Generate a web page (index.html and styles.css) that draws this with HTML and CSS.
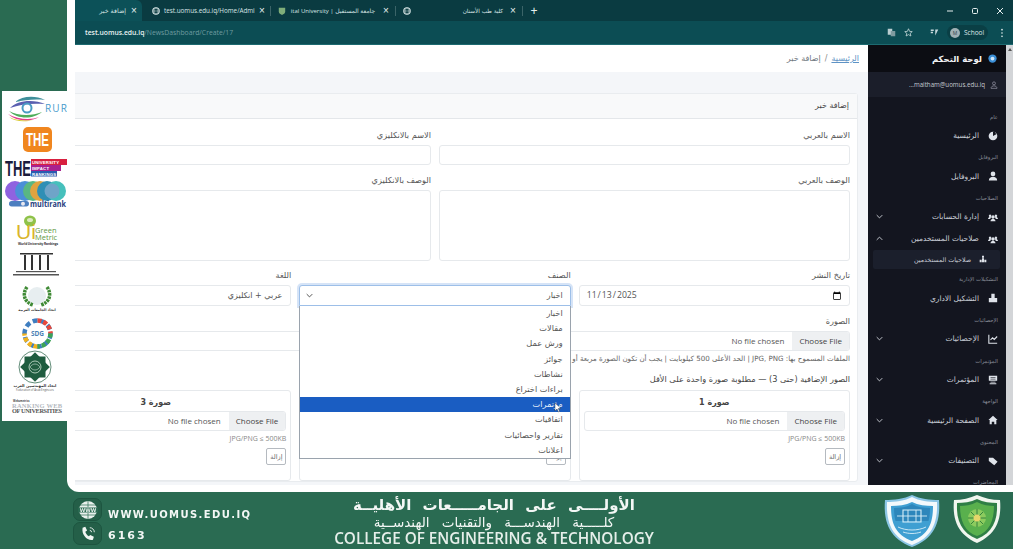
FILE: index.html
```html
<!DOCTYPE html>
<html lang="ar">
<head>
<meta charset="utf-8">
<title>إضافة خبر</title>
<link rel="stylesheet" href="styles.css">
</head>
<body>
<div class="stage">
  <div class="top">
    <aside class="rail">
      <svg class="logos" viewBox="2 91 65 330" width="65" height="330" xmlns="http://www.w3.org/2000/svg">
        <!-- RUR -->
        <path d="M15 102c7-6 20-7 30-2-10-1-21 0-30 2z" fill="#3f8f9a"/>
        <path d="M10 108c7-8 24-9 35-4-12-1-25 0-35 4z" fill="#5a5fb0"/>
        <circle cx="27" cy="108" r="4.500" fill="none" stroke="#4a9cc4" stroke-width="2"/>
        <path d="M9 111c9 5 23 5 33 1-8 7-24 8-33-1z" fill="#4fae5b"/>
        <path d="M8 114c10 6 24 6 31 3-8 5-22 5-31-3z" fill="#e23b8a"/>
        <path d="M9 117c8 4 17 4 24 3-7 2-18 2-24-3z" fill="#d9c92c"/>
        <text x="45" y="112" class="t-rur" textLength="22">RUR</text>
        <!-- THE -->
        <rect x="23" y="127" width="29" height="25" rx="5" fill="#f0861f"/>
        <text x="26" y="146" class="t-the" textLength="23" lengthAdjust="spacingAndGlyphs">THE</text>
        <!-- THE impact -->
        <text x="5" y="176" class="t-the2" textLength="26" lengthAdjust="spacingAndGlyphs">THE</text>
        <rect x="31" y="159" width="36" height="6" fill="#d8203f"/>
        <rect x="31" y="165" width="30" height="6" fill="#a8218f"/>
        <rect x="31" y="171" width="26" height="5.500" fill="#2a5db0"/>
        <text x="32" y="164" class="t-imp" textLength="27">UNIVERSITY</text>
        <text x="32" y="170" class="t-imp" textLength="17">IMPACT</text>
        <text x="32" y="176" class="t-imp" textLength="24">RANKINGS</text>
        <!-- multirank -->
        <circle cx="15" cy="191" r="10" fill="#8f63e0"/>
        <circle cx="25" cy="191" r="10" fill="#4b8fd8"/>
        <circle cx="33" cy="191" r="10" fill="#59b783"/>
        <circle cx="40" cy="191" r="10" fill="#e0a33f"/>
        <circle cx="47" cy="191" r="10" fill="#2f8fb5"/>
        <circle cx="56" cy="191" r="10" fill="#46c0bc"/>
        <circle cx="52" cy="191" r="7.500" fill="#6fa4c8"/>
        <rect x="9" y="201" width="20" height="5.500" rx="2.700" fill="#4d7fc0"/>
        <circle cx="23" cy="203.700" r="2" fill="#e8e8f0"/>
        <text x="30" y="207" class="t-multi" textLength="36" lengthAdjust="spacingAndGlyphs">multirank</text>
        <!-- UI GreenMetric -->
        <ellipse cx="30" cy="221" rx="6" ry="5.500" fill="#8fc24a"/>
        <ellipse cx="30" cy="220" rx="3" ry="2" fill="#dcecc0"/>
        <text x="16" y="239" class="t-ui">Ui</text>
        <text x="35" y="233" class="t-green">Green</text>
        <text x="35" y="240" class="t-green">Metric</text>
        <text x="18" y="244.500" class="t-small" textLength="40">World University Rankings</text>
        <!-- Columns -->
        <rect x="20" y="253" width="33" height="1.500" fill="#333"/>
        <path d="M25 255v15M32 255v15M40 255v15M48 255v15" stroke="#333" stroke-width="2"/>
        <rect x="16" y="271" width="40" height="1.200" fill="#555"/>
        <rect x="13" y="274" width="46" height="1.500" fill="#555"/>
        <!-- Wreath -->
        <circle cx="37" cy="296" r="9" fill="#e7eef0"/>
        <path d="M27 287c-5 7-3 15 6 18M47 287c5 7 3 15-6 18" fill="none" stroke="#3f8a35" stroke-width="3.500" stroke-dasharray="2.500 .8"/>
        <text x="37" y="311" class="t-ar">اتحاد الجامعات العربية</text>
        <!-- SDG -->
        <circle cx="37.500" cy="333.500" r="13" fill="none" stroke="#3f7ec0" stroke-width="4.500" stroke-dasharray="5 3"/>
        <path d="M37.500 320.500a13 13 0 0 1 13 13" fill="none" stroke="#e8483a" stroke-width="4.500" stroke-dasharray="4 2"/>
        <path d="M37.500 346.500a13 13 0 0 1-13-13" fill="none" stroke="#f2b21c" stroke-width="4.500" stroke-dasharray="4 2"/>
        <path d="M50.500 333.500a13 13 0 0 1-13 13" fill="none" stroke="#3da356" stroke-width="4.500" stroke-dasharray="4 2"/>
        <text x="37.500" y="336" class="t-sdg">SDG</text>
        <!-- Star -->
        <circle cx="35" cy="367" r="16" fill="none" stroke="#1f5c3f" stroke-width=".7"/>
        <rect x="24.500" y="356.500" width="21" height="21" fill="#1f5c3f"/>
        <rect x="24.500" y="356.500" width="21" height="21" fill="#1f5c3f" transform="rotate(45 35 367)"/>
        <circle cx="35" cy="367" r="6" fill="none" stroke="#cfe3d6" stroke-width=".8"/>
        <path d="M30 367c3-4 7-4 10 0-3 4-7 4-10 0z" fill="none" stroke="#cfe3d6" stroke-width=".6"/>
        <text x="35" y="387" class="t-ar2">اتحاد المهندسين العرب</text>
        <text x="35" y="391" class="t-tiny">Federation of Arab Engineers</text>
        <!-- Ranking web -->
        <text x="13" y="402" class="t-tiny2">Webometrics</text>
        <text x="37" y="407.500" class="t-rank1" textLength="50">RANKING WEB</text>
        <text x="37" y="412.500" class="t-rank2" textLength="50">OF UNIVERSITIES</text>
      </svg>
    </aside>

    <div class="panel">
      <div class="browser">
        <div class="tabbar">
          <div class="tab tab-active"><span class="tab-text">إضافة خبر</span><span class="tab-x">×</span></div>
          <div class="tab tab-2">
            <svg class="fav" viewBox="0 0 10 10"><circle cx="5" cy="5" r="4" fill="none" stroke="#d8e6e6" stroke-width="1.400"/><path d="M1 5h8M5 1c-3 3-3 5 0 8M5 1c3 3 3 5 0 8" stroke="#d8e6e6" stroke-width=".6" fill="none"/></svg>
            <span class="tab-text tab-url">test.uomus.edu.iq/Home/Admi</span><span class="tab-x">×</span>
          </div>
          <span class="tab-sep"></span>
          <div class="tab tab-3">
            <svg class="fav" viewBox="0 0 10 10"><path d="M1 1h8v5c0 2-2 3-4 4-2-1-4-2-4-4z" fill="#7fae7a"/></svg>
            <span class="tab-text tab-url" dir="rtl">جامعة المستقبل | ital University</span><span class="tab-x">×</span>
          </div>
          <span class="tab-sep"></span>
          <div class="tab tab-4">
            <svg class="fav" viewBox="0 0 10 10"><circle cx="5" cy="5" r="4" fill="none" stroke="#d8e6e6" stroke-width="1.400"/><path d="M1 5h8M5 1c-3 3-3 5 0 8M5 1c3 3 3 5 0 8" stroke="#d8e6e6" stroke-width=".6" fill="none"/></svg>
            <span class="tab-text tab-right">كلية طب الأسنان</span><span class="tab-x">×</span>
          </div>
          <span class="tab-sep"></span>
          <span class="tab-plus">+</span>
          <div class="winctl">
            <svg class="win-ico" viewBox="0 0 8 8"><path d="M1 4h6" stroke="#e6f0f0" stroke-width="1"/></svg>
            <svg class="win-ico" viewBox="0 0 8 8"><rect x="1.500" y="1.500" width="5" height="5" rx="1" fill="none" stroke="#e6f0f0" stroke-width="1"/></svg>
            <svg class="win-ico" viewBox="0 0 8 8"><path d="M1 1l6 6M7 1L1 7" stroke="#e6f0f0" stroke-width="1"/></svg>
          </div>
        </div>

        <div class="toolbar">
          <div class="url"><b>test.uomus.edu.iq</b>/NewsDashboard/Create/17</div>
          <div class="tools">
            <svg class="tool t-translate" viewBox="0 0 12 12"><rect x="1" y="1" width="6" height="8" fill="#b9cdd0"/><rect x="5" y="4" width="6" height="7" fill="#7f9ba0"/></svg>
            <svg class="tool t-star" viewBox="0 0 12 12"><path d="M6 1l1.500 3.500 3.500.3-2.700 2.300.9 3.600L6 8.800 2.800 10.700l.9-3.600L1 4.800l3.500-.3z" fill="none" stroke="#cfe0e0" stroke-width="1"/></svg>
            <svg class="tool t-ext" viewBox="0 0 12 12"><path d="M1 2h4v2H1zM1 5h3v2H1zM7 2h4L7 10z" fill="#c6d8dc"/></svg>
            <div class="profile"><span class="avatar">M</span><span>School</span></div>
            <svg class="kebab" viewBox="0 0 4 12"><circle cx="2" cy="2" r="1" fill="#e4eeee"/><circle cx="2" cy="6" r="1" fill="#e4eeee"/><circle cx="2" cy="10" r="1" fill="#e4eeee"/></svg>
          </div>
        </div>

        <div class="viewport">
          <main class="main" dir="rtl">
            <nav class="crumbs"><a href="#">الرئيسية</a><span class="crumb-sep">/</span><span>إضافة خبر</span></nav>
            <section class="card">
              <header class="card-head">إضافة خبر</header>
              <form class="card-body">
                <div class="grid2">
                  <label class="field"><span class="lbl">الاسم بالعربي</span><input class="ctl" type="text"></label>
                  <label class="field"><span class="lbl">الاسم بالانكليزي</span><input class="ctl" type="text"></label>
                  <label class="field"><span class="lbl">الوصف بالعربي</span><textarea class="ctl area"></textarea></label>
                  <label class="field"><span class="lbl">الوصف بالانكليزي</span><textarea class="ctl area"></textarea></label>
                </div>
                <div class="grid3">
                  <label class="field"><span class="lbl">تاريخ النشر</span><input class="ctl ctl-21 date" type="date" value="2025-11-13"></label>
                  <div class="field">
                    <span class="lbl">الصنف</span>
                    <div class="select-wrap">
                      <div class="ctl ctl-21 select-box">اخبار</div>
                      <svg class="chev-sel" viewBox="0 0 10 6"><path d="M1 1l4 4 4-4" fill="none" stroke="#444" stroke-width="1.300"/></svg>
                      <ul class="options">
                        <li>اخبار</li>
                        <li>مقالات</li>
                        <li>ورش عمل</li>
                        <li>جوائز</li>
                        <li>نشاطات</li>
                        <li>براءات اختراع</li>
                        <li class="opt-on">مؤتمرات</li>
                        <li>اتفاقيات</li>
                        <li>تقارير واحصائيات</li>
                        <li>اعلانات</li>
                      </ul>
                      <svg class="pointer" viewBox="0 0 8 12"><path d="M1 1v8l2-2 1.500 3 1.200-.6L4.300 6.500H7z" fill="#fff" stroke="#222" stroke-width=".4"/></svg>
                    </div>
                  </div>
                  <label class="field"><span class="lbl">اللغة</span><div class="ctl ctl-21 lang">عربي + انكليزي</div></label>
                </div>
                <label class="field"><span class="lbl">الصورة</span><input class="ctl file" type="file"></label>
                <p class="help">الملفات المسموح بها: JPG, PNG | الحد الأعلى 500 كيلوبايت | يجب أن تكون الصورة مربعة أو أفقية</p>
                <p class="extra-title">الصور الإضافية (حتى 3) — مطلوبة صورة واحدة على الأقل</p>
                <div class="grid3 images">
                  <div class="img-card"><div class="img-title">صورة 1</div><input class="ctl file" type="file"><div class="hint">JPG/PNG ≤ 500KB</div><button class="remove" type="button">إزالة</button></div>
                  <div class="img-card"><div class="img-title">صورة 2</div><input class="ctl file" type="file"><div class="hint">JPG/PNG ≤ 500KB</div><button class="remove" type="button">إزالة</button></div>
                  <div class="img-card"><div class="img-title">صورة 3</div><input class="ctl file" type="file"><div class="hint">JPG/PNG ≤ 500KB</div><button class="remove" type="button">إزالة</button></div>
                </div>
              </form>
            </section>
          </main>

          <aside class="sidebar" dir="rtl">
            <div class="side-head">
              <svg class="ico-brand" viewBox="0 0 12 12"><circle cx="6" cy="6" r="5.500" fill="#3b8fd6"/><circle cx="6" cy="6" r="2.500" fill="#cfe6f8"/></svg>
              <span>لوحة التحكم</span>
            </div>
            <div class="side-user">
              <svg class="ico-user" viewBox="0 0 12 12"><circle cx="6" cy="3.500" r="2.200" fill="none" stroke="#aab" stroke-width=".9"/><path d="M1.500 11c0-5 9-5 9 0z" fill="none" stroke="#aab" stroke-width=".9"/></svg>
              <span dir="ltr">...maitham@uomus.edu.iq</span>
            </div>
            <div class="side-nav">
              <div class="nav-label">عام</div>
              <div class="nav-item"><svg class="ico" viewBox="0 0 12 12"><circle cx="6" cy="6" r="5.200" fill="#dfe3ea"/><path d="M6 6V1h2l2 3z" fill="#13151f"/></svg><span>الرئيسية</span></div>
              <div class="nav-label">البروفايل</div>
              <div class="nav-item"><svg class="ico" viewBox="0 0 12 12"><circle cx="6" cy="3.500" r="2.800" fill="#dfe3ea"/><path d="M1 11.500c0-6 10-6 10 0z" fill="#dfe3ea"/></svg><span>البروفايل</span></div>
              <div class="nav-label">الصلاحيات</div>
              <div class="nav-item"><svg class="ico" viewBox="0 0 12 12"><path d="M6 4a2 2 0 1 0 .01 0zM2.500 3a1.500 1.500 0 1 0 .01 0zM9.500 3a1.500 1.500 0 1 0 .01 0zM3 11c0-4 6-4 6 0zM0 8.500c0-3 3.500-3 4-2-1 1-1.500 1.500-1.500 2zM12 8.500c0-3-3.500-3-4-2 1 1 1.500 1.500 1.500 2z" fill="#dfe3ea"/></svg><span>إدارة الحسابات</span><svg class="chev" viewBox="0 0 10 6"><path d="M1 1l4 4 4-4" fill="none" stroke="#cfd3da" stroke-width="1.300"/></svg></div>
              <div class="nav-item"><svg class="ico" viewBox="0 0 12 12"><path d="M6 4a2 2 0 1 0 .01 0zM2.500 3a1.500 1.500 0 1 0 .01 0zM9.500 3a1.500 1.500 0 1 0 .01 0zM3 11c0-4 6-4 6 0zM0 8.500c0-3 3.500-3 4-2-1 1-1.500 1.500-1.500 2zM12 8.500c0-3-3.500-3-4-2 1 1 1.500 1.500 1.500 2z" fill="#dfe3ea"/></svg><span>صلاحيات المستخدمين</span><svg class="chev" viewBox="0 0 10 6"><path d="M1 5l4-4 4 4" fill="none" stroke="#cfd3da" stroke-width="1.300"/></svg></div>
              <div class="nav-sub"><svg class="ico-sub" viewBox="0 0 12 12"><path d="M4.500 1h3v3h-3zM1 7h3v4H1zM4.500 5h3v6h-3zM8 7h3v4H8z" fill="#dfe3ea"/></svg><span>صلاحيات المستخدمين</span></div>
              <div class="nav-label">التشكيلات الإدارية</div>
              <div class="nav-item"><svg class="ico" viewBox="0 0 12 12"><path d="M4 1h4v5h3v5H1V6h3z" fill="#dfe3ea"/></svg><span>التشكيل الاداري</span></div>
              <div class="nav-label">الإحصائيات</div>
              <div class="nav-item"><svg class="ico" viewBox="0 0 12 12"><path d="M1 1v10h10M3 7l2.500-2.500L7.500 6.500 11 3" fill="none" stroke="#dfe3ea" stroke-width="1.300"/></svg><span>الإحصائيات</span><svg class="chev" viewBox="0 0 10 6"><path d="M1 1l4 4 4-4" fill="none" stroke="#cfd3da" stroke-width="1.300"/></svg></div>
              <div class="nav-label">المؤتمرات</div>
              <div class="nav-item"><svg class="ico" viewBox="0 0 12 12"><path d="M1 1h10v6H1zM3 8h6v1H3zM2 10h8v1H2z" fill="#dfe3ea"/><path d="M3 3h6M3 5h6" stroke="#13151f" stroke-width=".7"/></svg><span>المؤتمرات</span><svg class="chev" viewBox="0 0 10 6"><path d="M1 1l4 4 4-4" fill="none" stroke="#cfd3da" stroke-width="1.300"/></svg></div>
              <div class="nav-label">الواجهة</div>
              <div class="nav-item"><svg class="ico" viewBox="0 0 12 12"><path d="M6 1l5.500 5H10v5H7.500V8h-3v3H2V6H.500z" fill="#dfe3ea"/></svg><span>الصفحة الرئيسية</span><svg class="chev" viewBox="0 0 10 6"><path d="M1 1l4 4 4-4" fill="none" stroke="#cfd3da" stroke-width="1.300"/></svg></div>
              <div class="nav-label">المحتوى</div>
              <div class="nav-item"><svg class="ico" viewBox="0 0 12 12"><path d="M1 2h5l5.500 5-4 4L1 6z" fill="#dfe3ea"/></svg><span>التصنيفات</span><svg class="chev" viewBox="0 0 10 6"><path d="M1 1l4 4 4-4" fill="none" stroke="#cfd3da" stroke-width="1.300"/></svg></div>
              <div class="nav-label">المحاضرات</div>
            </div>
          </aside>
          <div class="scrollbar"><span class="scroll-arrow"></span></div>
        </div>
      </div>
    </div>
  </div>

  <footer class="footer">
    <div class="contact">
      <div class="contact-row">
        <span class="badge"><svg viewBox="0 0 20 20" width="20" height="20"><circle cx="10" cy="10" r="9" fill="#e8f0ec"/><rect x="0" y="7.500" width="20" height="5" fill="#2a6b52"/><path d="M2 5h16M2 15h16M10 1v6M10 13v6" stroke="#2a6b52" stroke-width=".7"/><text x="10" y="11.800" class="t-www">WWW</text></svg></span>
        <span class="contact-text contact-web">WWW.UOMUS.EDU.IQ</span>
      </div>
      <div class="contact-row">
        <span class="badge"><svg viewBox="0 0 20 20" width="18" height="18"><path d="M4 3l3-1 2 4-2 1.500c.5 2 2 4 4 5L12.500 11l4 2-1 3.500c-6 1.500-13-5.500-11.500-13.500z" fill="#f0f5f2"/><path d="M12 3a5 5 0 0 1 5 5M12 6a2 2 0 0 1 2 2" fill="none" stroke="#f0f5f2" stroke-width="1"/></svg></span>
        <span class="contact-text contact-num">6163</span>
      </div>
    </div>
    <div class="titles">
      <div class="title-1" dir="rtl">الأولــــى على الجامـــــعات الأهليــة</div>
      <div class="title-2" dir="rtl">كلـــــية الهندســـة والتقنيات الهندســية</div>
      <div class="title-3">COLLEGE OF ENGINEERING &amp; TECHNOLOGY</div>
    </div>
    <div class="shields">
      <svg width="58" height="54" viewBox="0 0 58 54"><path d="M29 1c8 4 18 5 27 5 2 24-6 39-27 47C8 45 0 30 2 6c9 0 19-1 27-5z" fill="#8cc6e6"/><path d="M29 3c7 4 17 5 25 5 1 22-6 36-25 43C10 44 3 30 4 8c8 0 18-1 25-5z" fill="#f3f9fc"/><path d="M29 8c6 3 14 4 21 4 0 18-5 29-21 35C13 41 8 30 8 12c7 0 15-1 21-4z" fill="#3f9fd2"/><path d="M29 10c5 3 12 4 18 4 0 5-.5 9-1.500 13h-33C11.500 23 11 19 11 14c6 0 13-1 18-4z" fill="#2d86bb"/><path d="M20 16h18v12H20z" fill="none" stroke="#d8eef8" stroke-width="1.100"/><path d="M14 22h30M25 16v12M33 16v12M15 33c8 4 20 4 28 0M20 38c6 2 12 2 18 0" fill="none" stroke="#d8eef8" stroke-width=".9"/></svg>
      <svg width="50" height="50" viewBox="0 0 50 50"><path d="M25 1c7 3 15 5 23 5 2 21-5 35-23 43C7 41 0 27 2 6c8 0 16-2 23-5z" fill="#f1f6ef"/><path d="M25 5c6 3 14 4 20 4 1 18-5 30-20 36C10 39 4 27 5 9c6 0 14-1 20-4z" fill="#2f7f45"/><path d="M25 8c6 3 12 4 17 4 0 15-5 26-17 30C13 38 8 27 8 12c5 0 11-1 17-4z" fill="#59b04d"/><circle cx="25" cy="24" r="9" fill="#8bcb5e"/><path d="M25 15v18M16 24h18M19 18l12 12M31 18L19 30" stroke="#2c7a3a" stroke-width=".9"/><circle cx="25" cy="24" r="3.500" fill="#e6d66a"/></svg>
    </div>
  </footer>
</div>
</body>
</html>
```

FILE: styles.css
```css
* { box-sizing: border-box; }
html, body { margin: 0; padding: 0; height: 100%; overflow: hidden; }
body {
  background: #2a6b52;
  font-family: "Open Sans", "DejaVu Sans", sans-serif;
  color: #555;
}
ul, p { margin: 0; padding: 0; }

.stage { display: flex; flex-direction: column; height: 549px; filter: blur(.5px); }
.top { display: flex; height: 492px; flex: none; }

/* Left logo rail */
.rail { width: 67px; flex: none; padding: 91px 0 0 2px; }
.logos { display: block; background: #fff; }
.t-rur { font: 400 10px "Open Sans", sans-serif; fill: #4a9ccc; }
.t-the { font: 700 18px "Liberation Sans", sans-serif; fill: #fff; }
.t-the2 { font: 700 22px "Liberation Sans", sans-serif; fill: #1c1c3c; }
.t-imp { font: 700 4.300px "Liberation Sans", sans-serif; fill: #fff; }
.t-multi { font: 700 8px "Open Sans", sans-serif; fill: #27407e; }
.t-ui { font: 400 21px "Liberation Sans", sans-serif; fill: #d9b52c; }
.t-green { font: 400 7.500px "Open Sans", sans-serif; fill: #5f9a45; }
.t-small { font: 700 3.200px "Open Sans", sans-serif; fill: #333; }
.t-ar { font: 700 3.500px "DejaVu Sans", sans-serif; fill: #333; text-anchor: middle; direction: rtl; }
.t-ar2 { font: 700 3.800px "DejaVu Sans", sans-serif; fill: #333; text-anchor: middle; direction: rtl; }
.t-sdg { font: 700 6.500px "Open Sans", sans-serif; fill: #4a7fb5; text-anchor: middle; }
.t-tiny { font: 400 2.800px "Open Sans", sans-serif; fill: #555; text-anchor: middle; }
.t-tiny2 { font: 700 2.500px "Open Sans", sans-serif; fill: #444; }
.t-rank1 { font: 700 6.500px "Liberation Serif", serif; fill: #b4b9c0; text-anchor: middle; }
.t-rank2 { font: 700 6.300px "Liberation Serif", serif; fill: #555; text-anchor: middle; }

/* White panel + browser */
.panel {
  flex: 1;
  min-width: 0;
  background: #fff;
  border-bottom-left-radius: 12px;
  padding: 0 0 7px 8px;
}
.browser { display: flex; flex-direction: column; height: 100%; overflow: hidden; }

.tabbar {
  display: flex;
  align-items: center;
  height: 21px;
  flex: none;
  background: #0a3b41;
  color: #d6e4e4;
  font-size: 7px;
}
.tab { display: flex; align-items: center; height: 21px; padding-right: 5px; }
.tab-active { width: 67px; padding-right: 4px; background: #0c5158; border-radius: 0 6px 0 0; }
.tab-2 { width: 126px; padding: 0 4px 0 8px; margin-left: 2px; }
.tab-3 { width: 124px; padding-left: 7px; }
.tab-4 { width: 126px; padding-left: 7px; }
.tab-text { flex: 1; white-space: nowrap; font-family: "DejaVu Sans", sans-serif; font-size: 6.300px; }
.tab-active .tab-text { text-align: right; padding-right: 4px; }
.tab-url { font-family: "Open Sans", "DejaVu Sans", sans-serif; font-size: 6.300px; padding-left: 4px; text-align: left; }
.tab-3 .tab-url { text-align: center; padding: 0 4px 0 2px; font-size: 6px; }
.tab-right { text-align: right; padding-right: 6px; font-size: 5.700px; }
.tab-x { width: 8px; text-align: center; font-size: 10px; line-height: 10px; color: #e6f0f0; font-family: "Liberation Sans", sans-serif; }
.fav { width: 8px; height: 8px; flex: none; }
.tab-sep { width: 1px; height: 10px; background: #3b6468; flex: none; }
.tab-plus { width: 18px; padding-left: 4px; text-align: center; font-size: 12px; line-height: 12px; color: #e6f0f0; font-family: "Liberation Sans", sans-serif; }
.winctl { display: flex; align-items: center; gap: 17px; margin-left: auto; padding-right: 9px; }
.win-ico { width: 8px; height: 8px; }

.toolbar {
  display: flex;
  align-items: center;
  height: 24px;
  flex: none;
  background: #0c4d54;
  border-bottom: 1px solid #1d6a70;
  padding: 0 9px 0 10px;
}
.url { font-size: 6.800px; color: #6f9ca0; }
.url b { font-weight: 600; color: #e8f2f2; }
.tools { display: flex; align-items: center; margin-left: auto; }
.tool { width: 9px; height: 9px; }
.t-star { margin-left: 8px; }
.t-ext { margin-left: 17px; }
.profile {
  display: flex;
  align-items: center;
  gap: 4px;
  height: 15px;
  width: 41px;
  margin-left: 8px;
  padding-left: 3px;
  border-radius: 8px;
  background: #0a3f45;
  color: #dfe9e9;
  font-size: 6.500px;
}
.avatar {
  width: 10px;
  height: 10px;
  border-radius: 50%;
  background: #9fb0b4;
  color: #33474a;
  font-size: 5px;
  line-height: 10px;
  text-align: center;
}
.kebab { width: 4px; height: 10px; margin-left: 12px; }

.viewport { display: flex; flex: 1; min-height: 0; }
.main { flex: 1; min-width: 0; background: #f4f6f9; overflow: hidden; }
.crumbs {
  display: flex;
  align-items: center;
  gap: 4px;
  height: 27px;
  padding-right: 9px;
  background: #fff;
  font-family: "DejaVu Sans", sans-serif;
  font-size: 8px;
  color: #6c757d;
}
.crumbs a { color: #5e93c5; }
.crumb-sep { color: #888; }

.card {
  width: 846px;
  margin: 21px 10px 0 0;
  background: #fff;
  border: 1px solid #e9ecef;
  border-radius: 3px;
}
.card-head {
  height: 25px;
  line-height: 24px;
  padding-right: 8px;
  background: #f8f9fa;
  border-bottom: 1px solid #e4e7ea;
  font-family: "DejaVu Sans", sans-serif;
  font-size: 8px;
  color: #444;
}
.card-body {
  display: flex;
  flex-direction: column;
  padding: 10px 7px 0;
  font-family: "DejaVu Sans", sans-serif;
}
.grid2 { display: grid; grid-template-columns: 1fr 1fr; gap: 9px 8px; }
.grid3 { display: grid; grid-template-columns: repeat(3, 1fr); gap: 8px; margin-top: 8px; }
.field { display: flex; flex-direction: column; min-width: 0; }
.card-body > .field { margin-top: 9px; }
.lbl { height: 12px; line-height: 12px; margin-bottom: 4px; font-size: 8.200px; color: #555; }
.ctl {
  display: block;
  width: 100%;
  height: 20px;
  padding: 0 7px;
  background: #fff;
  border: 1px solid #e6e9ec;
  border-radius: 3px;
  font-family: "Open Sans", "DejaVu Sans", sans-serif;
  font-size: 8px;
  color: #555;
  outline: none;
}
.ctl-21 { height: 21px; line-height: 19px; }
.area { height: 71px; resize: none; padding: 4px 7px; }
.date { direction: ltr; padding-left: 6px; font-size: 8.700px; }
.date::-webkit-calendar-picker-indicator { width: 10px; height: 10px; padding: 0; margin: 0; }
.lang { font-family: "DejaVu Sans", sans-serif; font-size: 8px; padding-right: 8px; }

.select-wrap { position: relative; }
.select-box {
  border-color: #9dbfe8;
  box-shadow: 0 0 0 2px rgba(70, 130, 220, .22);
  border-radius: 3px 3px 0 0;
  font-family: "DejaVu Sans", sans-serif;
  font-size: 8px;
}
.chev-sel { position: absolute; left: 7px; top: 8px; width: 7px; height: 5px; }
.options {
  position: absolute;
  top: 21px;
  left: 0;
  right: 0;
  z-index: 3;
  list-style: none;
  background: #fff;
  border: 1px solid #9aa3ad;
  border-top: 0;
  font-size: 8.200px;
  color: #555;
}
.options li { height: 15.200px; line-height: 15.200px; padding-right: 7px; }
.options .opt-on { background: #1a5dc2; color: #e8f0fb; }
.pointer { position: absolute; z-index: 4; right: 9px; top: 117px; width: 8px; height: 12px; }

.file { height: 20px; padding: 0; line-height: 18px; overflow: hidden; font-size: 8px; }
.file::file-selector-button {
  height: 20px;
  margin: -1px 0 -1px 8px;
  padding: 0 7px;
  border: 0;
  background: #eef0f2;
  color: #444;
  font: inherit;
}
.help { margin-top: 3px; height: 10px; line-height: 10px; font-size: 7.100px; color: #666; white-space: nowrap; }
.extra-title { margin-top: 9px; height: 12px; line-height: 12px; font-size: 8.200px; color: #444; }
.images { margin-top: 5px; }
.img-card {
  height: 91px;
  padding: 4px;
  border: 1px solid #e6e9ec;
  border-radius: 3px;
}
.img-title { height: 16px; line-height: 15px; text-align: center; font-size: 8px; font-weight: 700; color: #444; }
.hint { height: 13px; margin-top: 1px; line-height: 13px; font-size: 7px; color: #888; font-family: "Open Sans", sans-serif; }
.remove {
  display: block;
  width: 20px;
  height: 17px;
  margin-top: 3px;
  padding: 0;
  background: #fff;
  border: 1px solid #b5bac0;
  border-radius: 2px;
  font-family: "DejaVu Sans", sans-serif;
  font-size: 6.500px;
  color: #666;
}

/* Sidebar */
.sidebar {
  width: 138px;
  flex: none;
  background: #13151f;
  color: #c9cdd6;
  font-family: "DejaVu Sans", sans-serif;
  overflow: hidden;
}
.side-head {
  display: flex;
  align-items: center;
  gap: 6px;
  height: 27px;
  padding-right: 9px;
  background: #0c0d13;
  color: #f2f3f5;
  font-size: 8.500px;
  font-weight: 700;
}
.ico-brand { width: 9px; height: 9px; }
.side-user {
  display: flex;
  align-items: center;
  gap: 5px;
  height: 25px;
  padding-right: 8px;
  background: #1b1e2a;
  color: #c5c9d1;
  font-family: "Open Sans", "DejaVu Sans", sans-serif;
  font-size: 6.200px;
}
.ico-user { width: 8px; height: 8px; }
.side-nav { padding: 9px 8px 0 5px; }
.nav-label { height: 10px; line-height: 10px; margin: 5.600px 0 3px; font-size: 5.300px; color: #8a8e99; }
.nav-item { display: flex; align-items: center; gap: 9px; height: 22px; font-size: 7.500px; }
.ico { width: 10px; height: 10px; flex: none; }
.chev { width: 7px; height: 5px; margin-right: auto; margin-left: 3px; flex: none; }
.nav-sub {
  display: flex;
  align-items: center;
  gap: 8px;
  height: 19px;
  padding-right: 13px;
  margin-left: 0;
  margin-right: -2px;
  background: #1b1f2c;
  border-radius: 2px;
  font-size: 6.300px;
}
.ico-sub { width: 8px; height: 8px; flex: none; }

.scrollbar { width: 7px; flex: none; background: #d3d5d8; padding-top: 3px; }
.scroll-arrow {
  display: block;
  width: 0;
  height: 0;
  margin: 0 auto;
  border-left: 2.500px solid transparent;
  border-right: 2.500px solid transparent;
  border-bottom: 3px solid #555;
}

/* Footer */
.footer {
  display: grid;
  grid-template-columns: 331px 326px 1fr;
  height: 57px;
  flex: none;
  color: #f3f7f5;
}
.contact { display: flex; flex-direction: column; gap: 1px; padding: 6px 0 0 73px; }
.contact-row { display: flex; align-items: center; gap: 6px; height: 23px; }
.badge {
  display: flex;
  align-items: center;
  justify-content: center;
  width: 29px;
  height: 23px;
  border: 1px solid #1d5540;
  border-radius: 7px;
  background: #245f48;
}
.t-www { font: 700 5px "DejaVu Sans", sans-serif; fill: #e8f0ec; text-anchor: middle; }
.contact-text { font-family: "DejaVu Sans", sans-serif; font-weight: 700; font-size: 10px; letter-spacing: 1.400px; }
.contact-web { margin-top: 9px; }
.contact-num { margin-top: 4px; font-size: 11px; letter-spacing: 2px; }
.titles { text-align: center; white-space: nowrap; padding-top: 4px; }
.title-1 { height: 18px; line-height: 18px; font-family: "DejaVu Sans", sans-serif; font-weight: 700; font-size: 15px; word-spacing: 6px; }
.title-2 { height: 16px; line-height: 16px; font-family: "DejaVu Sans", sans-serif; font-size: 13.500px; word-spacing: 8px; }
.title-3 { height: 16px; line-height: 16px; font-family: "Open Sans", sans-serif; font-weight: 600; font-size: 15.300px; color: #e6efea; }
.shields { display: flex; align-items: flex-start; justify-content: flex-end; gap: 11px; padding: 2px 11px 0 0; }
```
